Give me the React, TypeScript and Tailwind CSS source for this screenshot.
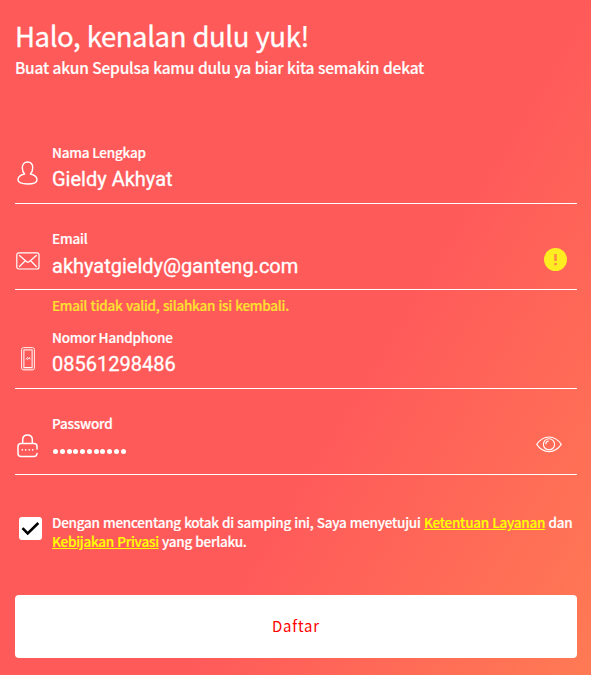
import type { ReactNode } from "react";

function UserIcon() {
  return (
    <svg className="mb-[3px]" width="22" height="26" viewBox="0 0 22 26" fill="none" stroke="currentColor" strokeWidth="1.4">
      <path d="M7.600 14C6 12.500 5.300 10.500 5.300 7.800C5.300 4.400 7.200 2 10.500 2s5.200 2.400 5.200 5.800c0 2.700-.7 4.700-2.300 6.200 4.500 1 6.600 3 6.600 5.700 0 3-3.700 4.300-9.500 4.300S1 22.700 1 19.700c0-2.700 2.100-4.700 6.600-5.700z" strokeLinejoin="round" />
    </svg>
  );
}

function MailIcon() {
  return (
    <svg width="24" height="18" viewBox="0 0 24 18" fill="none" stroke="currentColor" strokeWidth="1.2" strokeLinecap="round" strokeLinejoin="round">
      <rect x=".8" y=".8" width="22.200" height="16.200" rx="2" />
      <path d="M3.500 3.500l7.200 6.200q1.200 1 2.400 0l7.200-6.200M3.500 14.500l5.500-5.500M20.300 14.500L15 9" />
    </svg>
  );
}

function PhoneIcon() {
  return (
    <svg className="mb-px" width="14" height="24" viewBox="0 0 14 24" fill="none" stroke="currentColor">
      <rect x=".6" y=".6" width="12.800" height="22.300" rx="1.800" strokeWidth=".9" />
      <rect x="2.900" y="2.900" width="8.200" height="17.600" strokeWidth="1" />
      <path d="M2 22h10" strokeWidth=".5" />
      <path d="M4.800 12.300L7 10.200M6.200 12.900L8.300 10.800M8.200 10.300l1 2" strokeWidth=".9" />
    </svg>
  );
}

function LockIcon() {
  return (
    <svg width="22" height="24" viewBox="0 0 22 24" fill="none" stroke="currentColor" strokeWidth="1.5" strokeLinecap="round">
      <path d="M5.700 9.500V5.800C5.700 2.900 7.700 1 10.500 1s4.800 1.900 4.800 4.800v3.700M20 15v-2.500q0-3-3-3H4q-3 0-3 3v7q0 3 3 3h13q2.700 0 3-3" />
      <path d="M5.300 15.800h.01M8.700 15.800h.01M12.200 15.800h.01M15.700 15.800h.01" strokeWidth="1.700" />
    </svg>
  );
}

function EyeIcon() {
  return (
    <svg width="26" height="17" viewBox="0 0 26 17" fill="none" stroke="currentColor" strokeWidth="1.100">
      <path d="M.7 8.400C4 3.600 8 1 13 1s9 2.600 12.300 7.400C22 13.200 18 15.700 13 15.700S4 13.200.7 8.400z" strokeLinejoin="round" />
      <circle cx="13" cy="8.300" r="5.600" />
      <path d="M9.700 8.200Q9.900 5.200 12.800 5" />
    </svg>
  );
}

function AlertIcon() {
  return (
    <svg width="24" height="24" viewBox="0 0 24 24">
      <circle cx="11.500" cy="11.500" r="11.500" fill="#ffed22" />
      <path d="M10.200 5.900h2.600v7.200h-2.600zM10.200 15h2.600v2.200h-2.600z" fill="#ff8b45" />
    </svg>
  );
}

type FieldProps = { label: string; value: ReactNode; icon: ReactNode; action?: ReactNode; className: string; valueClass?: string };

function Field({ label, value, icon, action, className, valueClass = "pt-px" }: FieldProps) {
  return (
    <div className={`flex h-[62px] border-b border-white ${className}`}>
      <div className="flex h-[65px] w-[25px] shrink-0 items-center justify-center">{icon}</div>
      <div className="ml-[12px] flex-1">
        <div className="text-[13.500px] font-medium leading-[20px] tracking-[-0.2px] [-webkit-text-stroke:0.2px_white]">{label}</div>
        <div className={`font-[Roboto,sans-serif] text-[20px] leading-[32px] [-webkit-text-stroke:0.3px_white] ${valueClass}`}>{value}</div>
      </div>
      {action}
    </div>
  );
}

export default function App() {
  return (
    <main className="h-[675px] w-[591px] bg-[linear-gradient(121deg,#ff5a5a_59%,#ff7a54_100%)] pl-[15px] pr-[14px] pt-[17px] font-['Noto_Sans_CJK_SC',sans-serif] text-white">
      <h1 className="h-[38px] whitespace-nowrap text-[27.500px] font-normal leading-[36px] tracking-[-0.4px] [-webkit-text-stroke:0.3px_white] [word-spacing:0.6px]">Halo, kenalan dulu yuk!</h1>
      <p className="h-[24px] whitespace-nowrap text-[15.500px] font-medium leading-[24px] tracking-[-0.22px] [word-spacing:0.5px] [-webkit-text-stroke:0.15px_white]">Buat akun Sepulsa kamu dulu ya biar kita semakin dekat</p>

      <form onSubmit={(e) => e.preventDefault()}>
        <Field className="mt-[63px]" label="Nama Lengkap" value="Gieldy Akhyat" icon={<UserIcon />} />
        <Field
          className="mt-6"
          label="Email"
          value="akhyatgieldy@ganteng.com"
          valueClass="pt-[2px]"
          icon={<MailIcon />}
          action={<div className="mr-[9px] mt-[20px]"><AlertIcon /></div>}
        />
        <p className="ml-[37px] mt-[5px] h-[20px] whitespace-nowrap text-[13.500px] font-medium leading-[20px] tracking-[-0.28px] text-[#ffe12e] [word-spacing:0.7px] [-webkit-text-stroke:0.2px_#ffe12e]">
          Email tidak valid, silahkan isi kembali.
        </p>
        <Field className="mt-[12px]" label="Nomor Handphone" value="08561298486" icon={<PhoneIcon />} />
        <Field
          className="mt-6"
          label="Password"
          icon={<LockIcon />}
          value={
            <span className="flex h-[34px] items-center gap-[1.760px] pl-px">
              {Array.from({ length: 11 }, (_, i) => (
                <i key={i} className="size-[5px] rounded-full bg-white" />
              ))}
            </span>
          }
          action={<div className="mr-[15px] mt-[23px]"><EyeIcon /></div>}
        />
        <label className="mt-[38px] flex">
          <span className="ml-1 mt-[4px] flex size-[23px] shrink-0 items-center justify-center rounded-[3px] bg-white">
            <svg width="19" height="15" viewBox="0 0 19 15" fill="none" stroke="#000" strokeWidth="2.600">
              <path d="M1.500 7.200l5.200 5.200L17.300 2" />
            </svg>
          </span>
          <span className="ml-[10px] whitespace-nowrap text-[13.500px] font-medium leading-[19px] tracking-[-0.26px] [word-spacing:0.5px] [-webkit-text-stroke-width:0.2px]">
            Dengan mencentang kotak di samping ini, Saya menyetujui <a className="text-[#ffff00] underline">Ketentuan Layanan</a> dan
            <br />
            <a className="text-[#ffff00] underline">Kebijakan Privasi</a> yang berlaku.
          </span>
        </label>
        <button className="mt-[44px] flex h-[63px] w-full items-center justify-center rounded-[4px] bg-white pb-[1px] text-[15px] font-normal tracking-[0.8px] text-[#ff0000]">
          Daftar
        </button>
      </form>
    </main>
  );
}
